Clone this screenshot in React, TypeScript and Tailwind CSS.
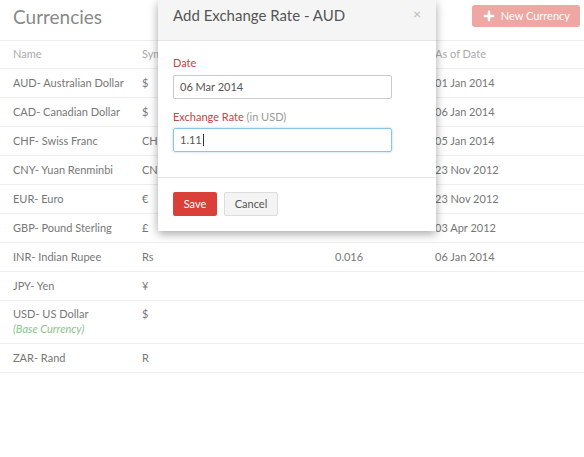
import { Plus } from 'lucide-react'

const rows = [
  { name: 'AUD- Australian Dollar', sym: '$', rate: '', date: '01 Jan 2014' },
  { name: 'CAD- Canadian Dollar', sym: '$', rate: '', date: '06 Jan 2014' },
  { name: 'CHF- Swiss Franc', sym: 'CHF', rate: '', date: '05 Jan 2014' },
  { name: 'CNY- Yuan Renminbi', sym: 'CNY', rate: '', date: '23 Nov 2012' },
  { name: 'EUR- Euro', sym: '€', rate: '', date: '23 Nov 2012' },
  { name: 'GBP- Pound Sterling', sym: '£', rate: '', date: '03 Apr 2012' },
  { name: 'INR- Indian Rupee', sym: 'Rs', rate: '0.016', date: '06 Jan 2014' },
  { name: 'JPY- Yen', sym: '¥', rate: '', date: '' },
  { name: 'USD- US Dollar', sym: '$', rate: '', date: '', base: true },
  { name: 'ZAR- Rand', sym: 'R', rate: '', date: '' },
]

export default function App() {
  return (
    <div className="relative h-[457px] w-[584px] overflow-hidden bg-white text-[11px] text-[#777]" style={{ fontFamily: 'Lato, "Open Sans", sans-serif' }}>
      {/* Page header */}
      <div className="flex h-[40px] items-start justify-between pl-[13px] pr-[4px] pt-[5px]">
        <h1 className="text-[19px] leading-[24px] text-[#888]">Currencies</h1>
        <button className="flex h-[22px] items-center gap-[5px] rounded-[3px] bg-[#eea7a2] px-[10px] text-[11px] text-white">
          <Plus size={14} strokeWidth={4.5} />
          New Currency
        </button>
      </div>

      {/* Table */}
      <div className="border-t border-[#eee]">
        <div className="flex h-[28px] items-center border-b border-[#eee] text-[#aaa]">
          <div className="w-[142px] pl-[13px]">Name</div>
          <div className="w-[193px]">Symbol</div>
          <div className="w-[100px]">Rate</div>
          <div>As of Date</div>
        </div>
        {rows.map(r => (
          <div key={r.name} className={`flex border-b border-[#eee] ${r.base ? 'h-[43px] pt-[6px]' : 'h-[29px] items-center'}`}>
            <div className="w-[142px] pl-[13px]">
              <div className="leading-[14px]">{r.name}</div>
              {r.base && <div className="mt-[1px] leading-[14px] italic text-[#8cc28c]">(Base Currency)</div>}
            </div>
            <div className="w-[193px] leading-[14px]">{r.sym}</div>
            <div className="w-[100px]">{r.rate}</div>
            <div>{r.date}</div>
          </div>
        ))}
      </div>

      {/* Modal */}
      <div className="absolute left-[158px] top-0 w-[278px] bg-white shadow-[0_3px_9px_rgba(0,0,0,0.35)]">
        <div className="relative flex h-[41px] items-center border-b border-[#e5e5e5] bg-[#f5f5f5] pl-[15px]">
          <h2 className="-mt-[9px] text-[15px] text-[#555]">Add Exchange Rate - AUD</h2>
          <span className="absolute right-[15px] top-[3px] text-[14px] text-[#bbb]">×</span>
        </div>
        <div className="px-[15px] pb-[25px] pt-[15px]">
          <label className="block text-[11px] leading-[14px] text-[#c9433f]">Date</label>
          <div className="mt-[5px] flex h-[24px] w-[219px] items-center rounded-[2px] border border-[#ccc] px-[6px] text-[11px] text-[#555]">06 Mar 2014</div>
          <label className="mt-[11px] block text-[11px] leading-[14px] text-[#c9433f]">
            Exchange Rate <span className="text-[#999]">(in USD)</span>
          </label>
          <div className="mt-[4px] flex h-[24px] w-[219px] items-center rounded-[2px] border border-[#8cc4ea] px-[6px] text-[11px] text-[#555] shadow-[0_0_3px_rgba(102,175,233,0.5)]">
            1.11<span className="ml-[1px] h-[12px] w-px bg-[#333]" />
          </div>
        </div>
        <div className="flex gap-[7px] border-t border-[#e5e5e5] px-[15px] pb-[15px] pt-[14px]">
          <button className="h-[24px] w-[44px] rounded-[2px] bg-[#d9403a] text-[11px] text-white">Save</button>
          <button className="h-[24px] w-[54px] rounded-[2px] border border-[#ddd] bg-[#f4f4f4] text-[11px] text-[#555]">Cancel</button>
        </div>
      </div>
    </div>
  )
}
